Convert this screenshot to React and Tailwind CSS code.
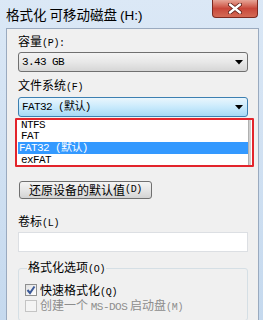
export default function App() {
  const cjk = { fontFamily: '"Noto Sans CJK SC", "Noto Sans", sans-serif' };
  const mono = { fontFamily: '"Liberation Mono", "Noto Sans CJK SC", monospace' };
  const Paren = ({ children }) => (
    <span className="text-[10px] tracking-[-0.3px]" style={{ fontFamily: '"Liberation Mono", monospace' }}>{children}</span>
  );
  const Arrow = () => (
    <svg width="8" height="5" viewBox="0 0 8 5" className="ml-auto mr-[4px]">
      <path d="M0 0 L8 0 L4 4.5 Z" fill="#000" />
    </svg>
  );
  return (
    <div className="w-[263px] h-[320px] overflow-hidden flex flex-col bg-gradient-to-b from-[#dbe8f6] to-[#c5d9ee]" style={cjk}>
      {/* title bar */}
      <div className="h-[28px] flex items-start shrink-0">
        <div className="pl-[6px] pt-[4px] text-[13.5px] leading-[20px] text-black">
          格式化 可移动磁盘 <span style={{ fontFamily: '"Liberation Sans", sans-serif' }}>(H:)</span>
        </div>
        <div className="ml-auto mr-[5px] w-[46px] h-[18px] rounded-b-[4px] border border-t-0 border-[#7d2a20] bg-gradient-to-b from-[#e6a597] via-[#c8473a] to-[#d46a55] flex items-center justify-center">
          <svg width="14" height="11" viewBox="0 0 14 11">
            <path d="M2 1.5 L12 9.5 M12 1.5 L2 9.5" stroke="#5a1b14" strokeWidth="4" strokeLinecap="round" />
            <path d="M2 1.5 L12 9.5 M12 1.5 L2 9.5" stroke="#ffffff" strokeWidth="2.4" strokeLinecap="round" />
          </svg>
        </div>
      </div>
      {/* body panel */}
      <div className="flex-1 ml-[6px] mr-[4px] border border-[#9aaabf] bg-[#f0f0f0] pl-[11px] pr-[10px] flex flex-col">
        <div className="mt-[4px] h-[16px] leading-[16px] text-[12px] text-black">容量<Paren>(P):</Paren></div>
        <div className="mt-[3px] h-[20px] rounded-[3px] border border-[#707070] bg-gradient-to-b from-[#f3f3f3] via-[#e8e8e8] to-[#d6d6d6] flex items-center pl-[3px]">
          <span className="text-[11px] leading-[14px] tracking-[-0.6px] text-black" style={mono}>3.43 GB</span>
          <Arrow />
        </div>
        <div className="mt-[5px] h-[16px] leading-[16px] text-[12px] text-black">文件系统<Paren>(F)</Paren></div>
        <div className="mt-[4px] h-[20px] rounded-[3px] border border-[#3c7fb1] bg-gradient-to-b from-[#eaf6fd] via-[#c9eafc] to-[#a7d9f5] flex items-center pl-[3px]">
          <span className="text-[11px] leading-[14px] tracking-[-0.6px] text-black" style={mono}>FAT32 (默认)</span>
          <Arrow />
        </div>
        {/* dropdown list */}
        <div className="relative -ml-[3px] -mr-[6px] mt-[1px] h-[49px] bg-white flex flex-col text-[11px] leading-[12px] tracking-[-0.6px] text-black overflow-hidden" style={mono}>
          <div className="h-[12px] shrink-0 ml-[3px] mr-[6px] pl-[3px] pt-[1px] leading-[12px]">NTFS</div>
          <div className="h-[12px] shrink-0 ml-[3px] mr-[6px] pl-[3px] leading-[12px]">FAT</div>
          <div className="h-[12px] shrink-0 ml-[3px] mr-[6px] pl-[1px] bg-[#3399ff] text-white leading-[12px]">FAT32 (默认)</div>
          <div className="h-[12px] shrink-0 ml-[3px] mr-[6px] pl-[3px] leading-[12px]">exFAT</div>
          <div className="absolute right-[3px] top-[2px] bottom-[2px] w-[3px] bg-[#cfcfcf] border-l border-[#b0b0b0]" />
          <div className="absolute inset-0 border-2 border-[#e3242b] rounded-[1px]" />
        </div>
        <div className="mt-[14px] ml-[1px] w-[133px] h-[18px] rounded-[3px] border border-[#707070] bg-gradient-to-b from-[#f4f4f4] via-[#e6e6e6] to-[#d3d3d3] flex items-center justify-center text-[12px] leading-[14px] text-black">
          还原设备的默认值<Paren>(D)</Paren>
        </div>
        <div className="mt-[14px] h-[16px] leading-[16px] text-[12px] text-black">卷标<Paren>(L)</Paren></div>
        <div className="mt-[3px] h-[20px] border border-[#dcdfe3] bg-white" />
        <fieldset className="mt-[7px] border border-[#d5dfe5] rounded-[3px] pl-[6px] pb-[6px]">
          <legend className="ml-[2px] px-[1px] text-[12px] leading-[16px] text-black">格式化选项<Paren>(O)</Paren></legend>
          <div className="mt-[4px] h-[16px] flex items-center gap-[3px] text-[12px] text-black">
            <div className="w-[12px] h-[12px] border border-[#8e8f8f] bg-gradient-to-br from-[#e0e0e0] to-[#ffffff] flex items-center justify-center">
              <svg width="10" height="10" viewBox="0 0 10 10">
                <path d="M1.5 5 L4 8 L8.5 1.5" stroke="#3b5998" strokeWidth="2" fill="none" />
              </svg>
            </div>
            <span>快速格式化<Paren>(Q)</Paren></span>
          </div>
          <div className="h-[16px] flex items-center gap-[3px] text-[12px] text-[#8d8d8d]">
            <div className="w-[12px] h-[12px] border border-[#c4c4c4] bg-[#f4f4f4]" />
            <span>创建一个 <span className="tracking-[-0.5px]" style={{ fontFamily: '"Liberation Mono", monospace', fontSize: '11px' }}>MS-DOS</span> 启动盘<Paren>(M)</Paren></span>
          </div>
        </fieldset>
      </div>
    </div>
  );
}
